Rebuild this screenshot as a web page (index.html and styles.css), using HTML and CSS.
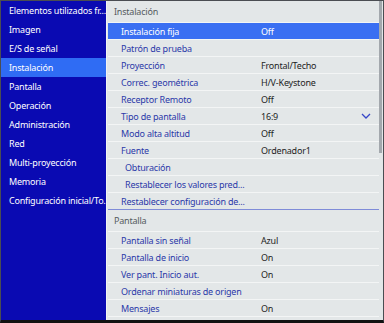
FILE: index.html
```html
<!DOCTYPE html>
<html lang="es">
  <head>
    <meta charset="UTF-8" />
    <title>Instalación</title>
    <link rel="stylesheet" href="styles.css">
  </head>
  <body>
    <div class="screen">
      <div class="sidebar">
        <div class="side-item">Elementos utilizados fr...</div>
        <div class="side-item">Imagen</div>
        <div class="side-item">E/S de señal</div>
        <div class="side-item active">Instalación</div>
        <div class="side-item">Pantalla</div>
        <div class="side-item">Operación</div>
        <div class="side-item">Administración</div>
        <div class="side-item">Red</div>
        <div class="side-item">Multi-proyección</div>
        <div class="side-item">Memoria</div>
        <div class="side-item">Configuración inicial/To...</div>
      </div>
      <div class="panel">
        <div class="list">
          <div class="group-title">Instalación</div>
          <div class="row selected"><span class="label">Instalación fija</span><span class="value">Off</span></div>
          <div class="row"><span class="label">Patrón de prueba</span></div>
          <div class="row"><span class="label">Proyección</span><span class="value">Frontal/Techo</span></div>
          <div class="row"><span class="label">Correc. geométrica</span><span class="value">H/V-Keystone</span></div>
          <div class="row"><span class="label">Receptor Remoto</span><span class="value">Off</span></div>
          <div class="row">
            <span class="label">Tipo de pantalla</span><span class="value">16:9</span>
            <svg class="chevron" width="10" height="6" viewBox="0 0 10 6"><path d="M1 1 L5 5 L9 1" fill="none" stroke="#3646c8" stroke-width="1.3"/></svg>
          </div>
          <div class="row"><span class="label">Modo alta altitud</span><span class="value">Off</span></div>
          <div class="row"><span class="label">Fuente</span><span class="value">Ordenador1</span></div>
          <div class="row sub"><span class="label">Obturación</span></div>
          <div class="row sub"><span class="label">Restablecer los valores pred...</span></div>
          <div class="row last"><span class="label">Restablecer configuración de...</span></div>

          <div class="group-title">Pantalla</div>
          <div class="row"><span class="label">Pantalla sin señal</span><span class="value">Azul</span></div>
          <div class="row"><span class="label">Pantalla de inicio</span><span class="value">On</span></div>
          <div class="row"><span class="label">Ver pant. Inicio aut.</span><span class="value">On</span></div>
          <div class="row"><span class="label">Ordenar miniaturas de origen</span></div>
          <div class="row"><span class="label">Mensajes</span><span class="value">On</span></div>
          <div class="row"><span class="label">Logotipo del usuario</span><span class="value">Off</span></div>
        </div>
        <div class="scrollbar"><div class="thumb"></div></div>
      </div>
    </div>
  </body>
</html>
```

FILE: styles.css
```css
body {
  margin: 0;
  font-family: "Noto Sans", "Open Sans", sans-serif;
  font-size: 9px;
  letter-spacing: -0.2px;
}
.screen {
  display: flex;
  width: 384px;
  height: 323px;
  box-sizing: border-box;
  border: 1px solid #4a4d52;
  border-bottom: 3px solid #111;
  overflow: hidden;
}
.sidebar {
  width: 105px;
  flex-shrink: 0;
  background: #0a0ab2;
}
.side-item {
  height: 19px;
  line-height: 19px;
  padding-left: 8px;
  color: #fff;
  white-space: nowrap;
}
.side-item.active {
  background: #2f6cf4;
}
.panel {
  flex: 1;
  display: flex;
  background: #e3e7e8;
  border-left: 1px solid #f2f4f4;
}
.list {
  flex: 1;
  padding-left: 1px;
}
.group-title {
  height: 21px;
  line-height: 21px;
  padding-left: 6px;
  color: #555b60;
  border-bottom: 1px solid #f3f5f5;
}
.row {
  display: flex;
  align-items: center;
  height: 16px;
  border-bottom: 1px solid #f3f5f5;
  white-space: nowrap;
}
.row .label {
  width: 140px;
  flex-shrink: 0;
  padding-left: 13px;
  color: #2b39a8;
}
.row.sub .label {
  padding-left: 17px;
}
.row .value {
  color: #1e1e1e;
}
.row.selected {
  background: #3a6ff2;
}
.row.selected .label,
.row.selected .value {
  color: #fff;
}
.row.last {
  border-bottom-color: #7f8cd8;
}
.chevron {
  margin-left: auto;
  margin-right: 8px;
}
.scrollbar {
  width: 4px;
  background: #e3e7e8;
}
.thumb {
  width: 3px;
  height: 152px;
  background: #a3a8ad;
}
```
